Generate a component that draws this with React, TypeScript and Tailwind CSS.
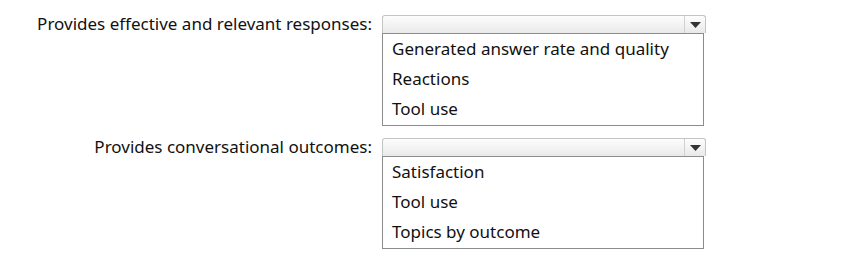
const groups = [
  {
    label: "Provides effective and relevant responses:",
    options: ["Generated answer rate and quality", "Reactions", "Tool use"],
  },
  {
    label: "Provides conversational outcomes:",
    options: ["Satisfaction", "Tool use", "Topics by outcome"],
  },
];

function Dropdown() {
  return (
    <div className="flex h-[18px] w-[324px] rounded-t-[3px] border border-b-0 border-[#c4c4c4] bg-gradient-to-b from-[#fdfdfd] to-[#e9e9e9]">
      <div className="flex-1" />
      <div className="flex w-[21px] items-center justify-center border-l border-[#d0d0d0]">
        <svg width="11" height="6" viewBox="0 0 11 6">
          <path d="M0 0H11L5.5 6Z" fill="#333" />
        </svg>
      </div>
    </div>
  );
}

export default function App() {
  return (
    <div
      className="h-[262px] w-[851px] bg-white pt-[15px] text-[17px] text-[#111]"
      style={{ fontFamily: '"Noto Sans", sans-serif' }}
    >
      {groups.map((g, i) => (
        <div key={i} className={i === 0 ? "flex" : "mt-[12px] flex"}>
          <div className="w-[372px] text-right leading-[18px]">{g.label}</div>
          <div className="ml-[10px] flex flex-col">
            <Dropdown />
            <div className="flex w-[322px] flex-col border border-[#8c8c8c] bg-white pb-[1px] pl-[9px]">
              {g.options.map((o) => (
                <div key={o} className="h-[30px] leading-[29px]">
                  {o}
                </div>
              ))}
            </div>
          </div>
        </div>
      ))}
    </div>
  );
}
